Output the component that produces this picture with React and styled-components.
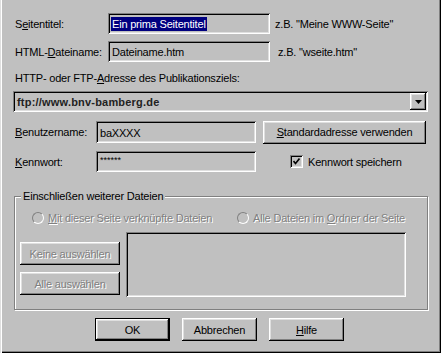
import * as React from "react"
import styled, { createGlobalStyle } from "styled-components"

const GlobalStyle = createGlobalStyle`
  body {
    margin: 0;
    background: #c0c0c0;
  }
`

const raised = `
  box-shadow: inset -1px -1px 0 #000, inset 1px 1px 0 #fff,
    inset -2px -2px 0 #808080, inset 2px 2px 0 #dfdfdf;
`
const sunken = `
  box-shadow: inset 1px 1px 0 #808080, inset -1px -1px 0 #fff,
    inset 2px 2px 0 #000, inset -2px -2px 0 #dfdfdf;
`

const Dialog = styled.div`
  width: 441px;
  height: 353px;
  box-sizing: border-box;
  padding: 13px 13px 0 13px;
  background: #c0c0c0;
  font-family: "Liberation Sans", Arial, sans-serif;
  font-size: 11px;
  letter-spacing: -0.2px;
  color: #000;
  box-shadow: inset 1px 0 0 #dfdfdf, inset 2px 0 0 #fff,
    inset -1px -1px 0 #000, inset -2px -2px 0 #808080;
  display: flex;
  flex-direction: column;
`

const Row = styled.div`
  display: flex;
  align-items: center;
  height: ${p => p.$h || 21}px;
  margin-top: ${p => p.$mt || 0}px;
`

const Label = styled.label`
  width: ${p => p.$w}px;
  padding-left: 2px;
  box-sizing: border-box;
  flex-shrink: 0;
`

const Field = styled.div`
  width: ${p => p.$w}px;
  height: 100%;
  box-sizing: border-box;
  padding: 3px 3px 2px 4px;
  display: flex;
  align-items: ${p => (p.$top ? "flex-start" : "center")};
  white-space: nowrap;
  overflow: hidden;
  ${sunken}
  flex-shrink: 0;
`

const Selected = styled.span`
  background: #000080;
  color: #fff;
  margin-left: -1px;
  padding: 1px;
  line-height: 12px;
`

const Stars = styled.span`
  font-size: 9px;
  letter-spacing: 0;
  margin-top: 1px;
`

const Hint = styled.span`
  margin-left: ${p => p.$ml}px;
`

const TopLabel = styled.div`
  margin-top: 10px;
  padding-left: 2px;
  line-height: 13px;
`

const Combo = styled.div`
  margin-top: 6px;
  width: 415px;
  height: 21px;
  box-sizing: border-box;
  padding: 2px 2px 2px 4px;
  display: flex;
  align-items: center;
  ${sunken}
`

const ComboText = styled.span`
  flex: 1;
  font-weight: bold;
  letter-spacing: 0.2px;
  color: #222;
`

const ArrowButton = styled.div`
  width: 16px;
  height: 17px;
  display: flex;
  align-items: center;
  justify-content: center;
  ${raised}
`

const Button = styled.button`
  font: inherit;
  letter-spacing: inherit;
  color: ${p => (p.disabled ? "#808080" : "#000")};
  text-shadow: ${p => (p.disabled ? "1px 1px 0 #fff" : "none")};
  width: ${p => p.$w}px;
  height: 23px;
  padding: 0;
  border: 0;
  background: #c0c0c0;
  margin-left: ${p => p.$ml || 0}px;
  ${raised}
  ${p =>
    p.$default &&
    `box-shadow: inset 0 0 0 1px #000, inset -2px -2px 0 #000, inset 2px 2px 0 #fff,
      inset -3px -3px 0 #808080, inset 3px 3px 0 #dfdfdf;`}
`

const CheckWrap = styled.label`
  display: flex;
  align-items: center;
  margin-left: 34px;
  gap: 5px;
`

const CheckBox = styled.span`
  width: 13px;
  height: 13px;
  box-sizing: border-box;
  display: flex;
  align-items: center;
  justify-content: center;
  ${sunken}
`

const Group = styled.fieldset`
  margin: 18px 0 0 1px;
  width: 414px;
  box-sizing: border-box;
  padding: 0 0 12px 0;
  border: 1px solid #808080;
  box-shadow: 1px 1px 0 #fff, inset 1px 1px 0 #fff;
`

const Legend = styled.legend`
  margin-left: 6px;
  padding: 0 2px;
  line-height: 13px;
  background: #c0c0c0;
`

const RadioRow = styled.div`
  display: flex;
  align-items: center;
  margin-top: 8px;
  padding-left: 17px;
  height: 13px;
`

const RadioItem = styled.div`
  display: flex;
  align-items: center;
  gap: 4px;
  width: ${p => p.$w || "auto"};
  color: #808080;
  text-shadow: 1px 1px 0 #fff;
`

const RadioDot = styled.span`
  width: 12px;
  height: 12px;
  box-sizing: border-box;
  border-radius: 50%;
  border: 1px solid;
  border-color: #808080 #fff #fff #808080;
  flex-shrink: 0;
`

const Lower = styled.div`
  display: flex;
  margin-top: 8px;
  padding-left: 5px;
  gap: 6px;
`

const ButtonColumn = styled.div`
  display: flex;
  flex-direction: column;
  gap: 7px;
  margin-top: 10px;
`

const ListBox = styled.div`
  width: 280px;
  height: 65px;
  ${sunken}
`

const Footer = styled.div`
  display: flex;
  justify-content: center;
  gap: 12px;
  margin-top: 8px;
  padding-right: 2px;
`

export default function App() {
  return (
    <Dialog>
      <GlobalStyle />
      <Row>
        <Label $w={95}>S<u>e</u>itentitel:</Label>
        <Field $w={162}>
          <Selected>Ein prima Seitentitel</Selected>
        </Field>
        <Hint $ml={5}>z.B. "Meine WWW-Seite"</Hint>
      </Row>
      <Row $mt={7}>
        <Label $w={95}>HTML-<u>D</u>ateiname:</Label>
        <Field $w={162}>Dateiname.htm</Field>
        <Hint $ml={8}>z.B. "wseite.htm"</Hint>
      </Row>
      <TopLabel>
        HTTP- oder FTP-<u>A</u>dresse des Publikationsziels:
      </TopLabel>
      <Combo>
        <ComboText>ftp://www.bnv-bamberg.de</ComboText>
        <ArrowButton>
          <svg width="7" height="4" viewBox="0 0 7 4">
            <polygon points="0,0 7,0 3.5,4" fill="#000" />
          </svg>
        </ArrowButton>
      </Combo>
      <Row $mt={9} $h={22}>
        <Label $w={83}><u>B</u>enutzername:</Label>
        <Field $w={160}>baXXXX</Field>
        <Button $w={163} $ml={7}><u>S</u>tandardadresse verwenden</Button>
      </Row>
      <Row $mt={8}>
        <Label $w={83}><u>K</u>ennwort:</Label>
        <Field $w={160} $top><Stars>******</Stars></Field>
        <CheckWrap>
          <CheckBox>
            <svg width="7" height="7" viewBox="0 0 7 7">
              <polyline points="0.5,3 2.5,5.5 6.5,0.5" fill="none" stroke="#000" strokeWidth="1.6" />
            </svg>
          </CheckBox>
          Kennwort speichern
        </CheckWrap>
      </Row>
      <Group>
        <Legend>Einschließen weiterer Dateien</Legend>
        <RadioRow>
          <RadioItem $w="205px">
            <RadioDot />
            <span><u>M</u>it dieser Seite verknüpfte Dateien</span>
          </RadioItem>
          <RadioItem>
            <RadioDot />
            <span>Alle Dateien im <u>O</u>rdner der Seite</span>
          </RadioItem>
        </RadioRow>
        <Lower>
          <ButtonColumn>
            <Button $w={100} disabled>Keine auswählen</Button>
            <Button $w={100} disabled>Alle auswählen</Button>
          </ButtonColumn>
          <ListBox />
        </Lower>
      </Group>
      <Footer>
        <Button $w={75} $default>OK</Button>
        <Button $w={75}>Abbrechen</Button>
        <Button $w={75}><u>H</u>ilfe</Button>
      </Footer>
    </Dialog>
  )
}
